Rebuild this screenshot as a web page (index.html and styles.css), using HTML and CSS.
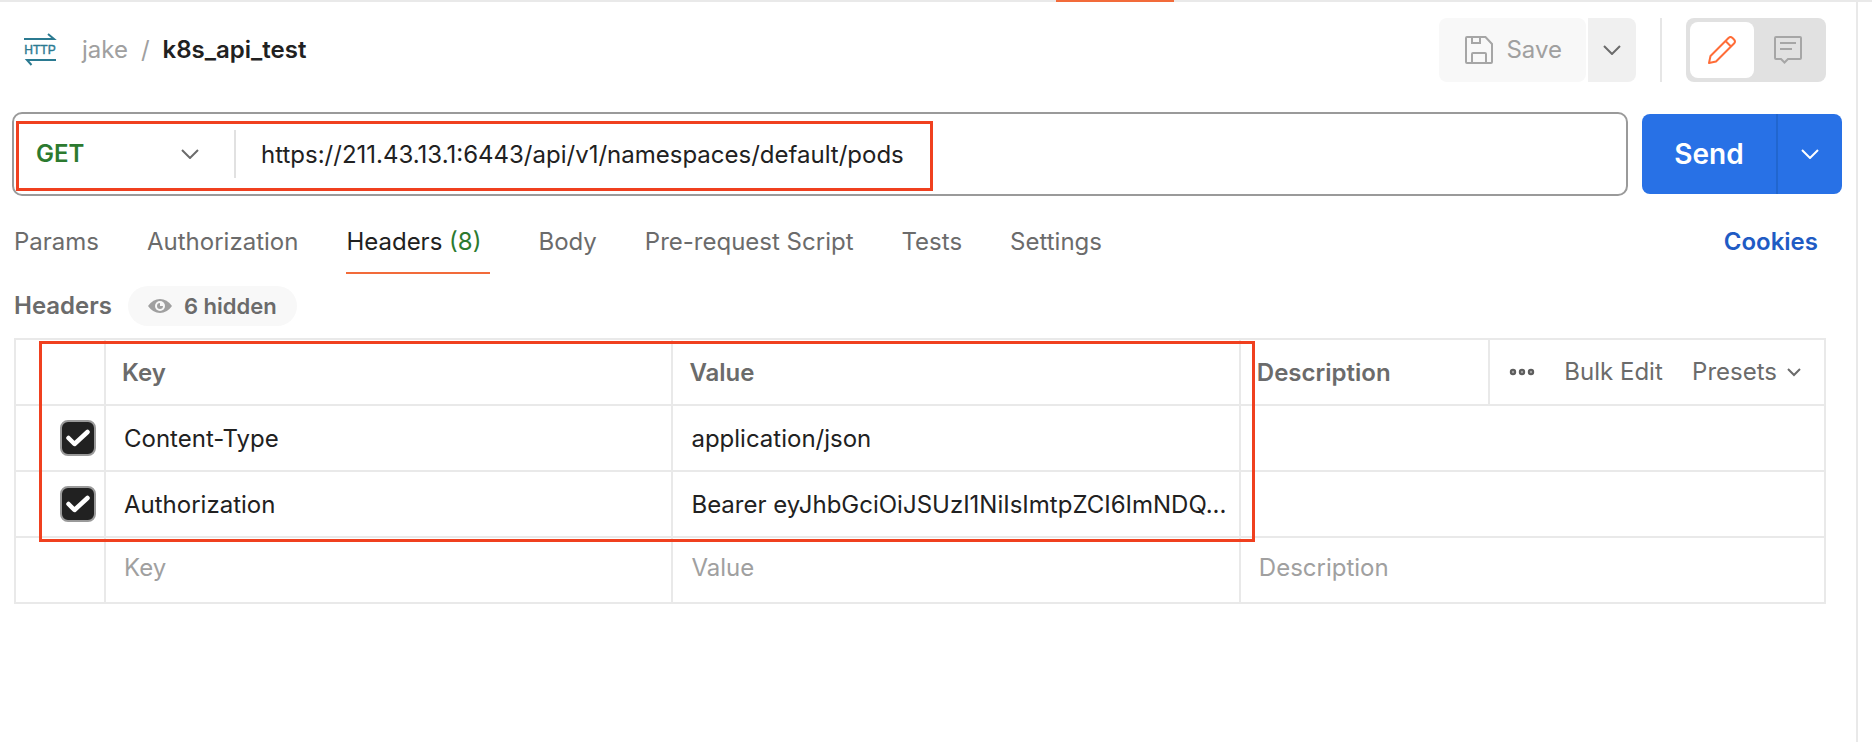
FILE: index.html
```html
<!DOCTYPE html>
<html lang="en">
<head>
<meta charset="utf-8">
<title>k8s_api_test</title>
<link rel="stylesheet" href="styles.css">
</head>
<body>
<div class="tabstrip"><span class="tabstrip-active"></span></div>
<div class="shell">
<main class="request">
  <header class="topbar">
    <svg class="http-icon" width="32" height="34" viewBox="0 0 32 34" aria-hidden="true">
      <path d="M0 6H30L24 1M32 27H3L7.500 32" fill="none" stroke="#2b7a91" stroke-width="2"/>
      <text class="http-text" x="16" y="21" text-anchor="middle">HTTP</text>
    </svg>
    <nav class="crumbs" aria-label="Breadcrumb">
      <a class="crumb" href="#">jake</a>
      <span class="crumb">/</span>
      <h1 class="crumb-title">k8s_api_test</h1>
    </nav>
    <div class="save-group">
      <button class="save" type="button">
        <svg width="28" height="28" viewBox="0 0 28 28" fill="none" stroke="#a6a6a6" stroke-width="2" aria-hidden="true"><path d="M2 1H20.500L27 8V26Q27 27 26 27H2Q1 27 1 26V2Q1 1 2 1ZM7 1V7H15V1M7 27V18Q7 17 8 17H20Q21 17 21 18V27"/></svg>
        Save
      </button>
      <button class="save-more" type="button" aria-label="Save options">
        <svg width="18" height="10" viewBox="0 0 18 10" fill="none" stroke="#6b6b6b" stroke-width="2" aria-hidden="true"><path d="M1 1L9 9L17 1"/></svg>
      </button>
    </div>
    <span class="divider"></span>
    <div class="toggle">
      <button class="toggle-button toggle-on" type="button" aria-label="Edit">
        <svg width="28" height="28" viewBox="0 0 28 28" fill="none" stroke="#ff6c37" stroke-width="2" stroke-linejoin="round" aria-hidden="true"><path d="M1 27L2.500 20L20.500 2Q22.500 0 24.500 2L26 3.500Q28 5.500 26 7.500L8 25.500ZM17.500 5L23 10.500"/></svg>
      </button>
      <button class="toggle-button" type="button" aria-label="Comments">
        <svg width="28" height="28" viewBox="0 0 28 28" fill="none" stroke="#a6a6a6" stroke-width="2" aria-hidden="true"><path d="M2 1H26Q27 1 27 2V22Q27 23 26 23H14L10.500 26.500L7 23H2Q1 23 1 22V2Q1 1 2 1ZM6 7H22M6 13H18"/></svg>
      </button>
    </div>
  </header>

  <form class="urlrow">
    <div class="urlbox">
      <div class="method">
        <select class="method-select" aria-label="Method"><option>GET</option><option>POST</option></select>
        <svg width="18" height="10" viewBox="0 0 18 10" fill="none" stroke="#6b6b6b" stroke-width="2" aria-hidden="true"><path d="M1 1L9 9L17 1"/></svg>
      </div>
      <input class="url" type="text" aria-label="Request URL" value="https://211.43.13.1:6443/api/v1/namespaces/default/pods">
      <span class="mark mark-url"></span>
    </div>
    <div class="send-group">
      <button class="send" type="button">Send</button>
      <button class="send-more" type="button" aria-label="Send options">
        <svg width="18" height="10" viewBox="0 0 18 10" fill="none" stroke="#fff" stroke-width="2" aria-hidden="true"><path d="M1 1L9 9L17 1"/></svg>
      </button>
    </div>
  </form>

  <nav class="tabs" aria-label="Request sections">
    <a class="tab" href="#">Params</a>
    <a class="tab" href="#">Authorization</a>
    <a class="tab tab-on" href="#">Headers <span class="count">(8)</span></a>
    <a class="tab" href="#">Body</a>
    <a class="tab" href="#">Pre-request Script</a>
    <a class="tab" href="#">Tests</a>
    <a class="tab" href="#">Settings</a>
    <a class="cookies" href="#">Cookies</a>
  </nav>

  <div class="subhead">
    <h2 class="subhead-title">Headers</h2>
    <button class="pill" type="button">
      <svg width="24" height="14" viewBox="0 0 24 14" aria-hidden="true"><path d="M0 7Q5 0 12 0T24 7Q19 14 12 14T0 7Z" fill="#a0a0a0"/><circle cx="12" cy="7" r="5" fill="#f8f8f8"/><path d="M12 4A3 3 0 1 0 15 7H12Z" fill="#a0a0a0"/></svg>
      6 hidden
    </button>
  </div>

  <div class="tablewrap">
    <table class="grid">
      <colgroup><col class="col-check"><col class="col-text"><col class="col-text"><col><col class="col-actions"></colgroup>
      <thead>
        <tr>
          <th></th><th>Key</th><th>Value</th><th>Description</th>
          <td class="actions-cell">
            <div class="actions">
              <button class="plain" type="button" aria-label="More">
                <svg width="26" height="8" viewBox="0 0 26 8" fill="#a0a0a0" stroke="#5c5c5c" stroke-width="2" aria-hidden="true"><circle cx="4" cy="4" r="2.200"/><circle cx="13" cy="4" r="2.200"/><circle cx="22" cy="4" r="2.200"/></svg>
              </button>
              <button class="plain" type="button">Bulk Edit</button>
              <button class="plain presets" type="button">Presets
                <svg width="14" height="9" viewBox="0 0 14 9" fill="none" stroke="#6b6b6b" stroke-width="2" aria-hidden="true"><path d="M1 1L7 7L13 1"/></svg>
              </button>
            </div>
          </td>
        </tr>
      </thead>
      <tbody>
        <tr>
          <td class="check-cell"><label class="check"><input class="check-input" type="checkbox" checked aria-label="Content-Type"><svg class="check-mark" width="24" height="18" viewBox="0 0 24 18" aria-hidden="true"><path d="M2.500 9L8.500 15L21.500 3" fill="none" stroke="#fff" stroke-width="4.500" stroke-linecap="round" stroke-linejoin="round"/></svg></label></td>
          <td>Content-Type</td><td>application/json</td><td colspan="2"></td>
        </tr>
        <tr>
          <td class="check-cell"><label class="check"><input class="check-input" type="checkbox" checked aria-label="Authorization"><svg class="check-mark" width="24" height="18" viewBox="0 0 24 18" aria-hidden="true"><path d="M2.500 9L8.500 15L21.500 3" fill="none" stroke="#fff" stroke-width="4.500" stroke-linecap="round" stroke-linejoin="round"/></svg></label></td>
          <td>Authorization</td><td>Bearer eyJhbGciOiJSUzI1NiIsImtpZCI6ImNDQ...</td><td colspan="2"></td>
        </tr>
        <tr class="blank">
          <td></td>
          <td><input class="cell-input" type="text" placeholder="Key" aria-label="Key"></td>
          <td><input class="cell-input" type="text" placeholder="Value" aria-label="Value"></td>
          <td colspan="2"><input class="cell-input" type="text" placeholder="Description" aria-label="Description"></td>
        </tr>
      </tbody>
    </table>
    <span class="mark mark-table"></span>
  </div>
</main>
</div>
</body>
</html>
```
FILE: styles.css
```css
* { box-sizing: border-box; }

body {
  margin: 0;
  min-height: 100vh;
  display: flex;
  flex-direction: column;
  background: #fff;
  color: #212121;
  font: 24px/32px Inter, "Liberation Sans", sans-serif;
}

button, input, select { font: inherit; color: inherit; border: 0; margin: 0; padding: 0; background: none; }
button { cursor: pointer; }
a { text-decoration: none; color: inherit; }
svg { display: block; flex: none; }

.tabstrip { height: 2px; background: #e9e9e9; }
.tabstrip-active { display: block; width: 118px; height: 2px; margin-left: 1056px; background: #f26b3a; }

.shell { flex: 1; display: flex; padding-right: 14px; }
.request { flex: 1; min-width: 0; border-right: 2px solid #e9e9e9; padding: 16px 14px 0 12px; }

.topbar { display: flex; align-items: center; height: 64px; padding: 0 16px 0 12px; }
.http-icon { overflow: visible; }
.http-text { font: 12px "Liberation Sans", sans-serif; fill: #2b7a91; stroke: #2b7a91; stroke-width: 0.4px; }
.crumbs { display: flex; gap: 13px; margin-left: 26px; margin-right: auto; color: #a0a0a0; }
.crumb-title { margin: 0; font-size: 24px; font-weight: 600; color: #212121; }

.save-group { display: flex; gap: 2px; height: 64px; }
.save { display: flex; align-items: center; gap: 13px; padding: 0 24px 0 26px; border-radius: 8px; background: #f8f8f8; color: #a0a0a0; }
.save-more { display: grid; place-items: center; width: 48px; border-radius: 0 8px 8px 0; background: #f0f0f0; }
.divider { width: 2px; height: 64px; margin: 0 24px; background: #e6e6e6; }
.toggle { display: flex; width: 140px; height: 64px; padding: 4px; border-radius: 8px; background: #e1e1e1; }
.toggle-button { display: grid; place-items: center; width: 68px; border-radius: 8px; }
.toggle-on { width: 64px; background: #fff; }

.urlrow { display: flex; align-items: center; gap: 14px; margin: 30px 0 0; }
.urlbox { position: relative; flex: 1; display: flex; align-items: center; height: 84px; border: 2px solid #9a9a9a; border-radius: 10px; }
.method { display: flex; align-items: center; width: 222px; height: 48px; padding: 0 35px 0 22px; border-right: 2px solid #e1e1e1; }
.method-select { flex: 1; min-width: 0; appearance: none; font-weight: 600; color: #2c7a2f; outline: 0; }
.url { flex: 1; min-width: 0; height: 48px; padding: 0 25px; outline: 0; }
.send-group { display: flex; height: 80px; border-radius: 8px; overflow: hidden; background: #2871e6; color: #fff; }
.send { width: 134px; font-size: 28px; font-weight: 600; }
.send-more { display: grid; place-items: center; width: 66px; border-left: 2px solid #2166cf; }

.mark { position: absolute; border: 3px solid #f0401f; pointer-events: none; }
.mark-url { left: 2px; top: 7px; width: 917px; height: 70px; }
.mark-table { left: 25px; top: 3px; width: 1216px; height: 201px; }

.tabs { display: flex; gap: 48px; margin-top: 14px; padding: 0 24px 0 2px; color: #6b6b6b; }
.tab { white-space: nowrap; padding: 14px 0; border-top: 2px solid transparent; border-bottom: 2px solid transparent; }
.tab-on { padding-right: 9px; color: #212121; border-bottom-color: #f26b3a; }
.count { color: #2c7a2f; }
.cookies { margin-left: auto; padding: 16px 0; font-weight: 600; color: #1f5bc4; }

.subhead { display: flex; align-items: center; gap: 16px; margin: 12px 0 0 2px; color: #6b6b6b; }
.subhead-title { margin: 0; font-size: 24px; font-weight: 600; }
.pill { display: flex; align-items: center; gap: 12px; height: 40px; padding: 0 20px; border-radius: 20px; background: #f8f8f8; font-size: 22px; font-weight: 600; }

.tablewrap { position: relative; margin: 12px 16px 0 2px; }
.grid { width: 100%; table-layout: fixed; border-collapse: collapse; }
.col-check { width: 90px; }
.col-text { width: 31.35%; }
.col-actions { width: 336px; }
.grid th, .grid td { height: 66px; padding: 2px 16px 0 18px; border: 2px solid #e9e9e9; text-align: left; white-space: nowrap; }
.grid th { padding-left: 16px; font-weight: 600; color: #6b6b6b; }
.grid .actions-cell { padding: 0 23px 0 19px; }
.actions { display: flex; align-items: center; justify-content: space-between; color: #6b6b6b; }
.presets { display: flex; align-items: center; gap: 10px; }
.grid .check-cell { padding: 0 8px 0 0; }
.check { position: relative; display: block; width: 36px; height: 36px; margin-left: auto; }
.check-input { display: block; appearance: none; width: 36px; height: 36px; border: 2px solid #9a9a9a; border-radius: 8px; background: #212121; }
.check-mark { position: absolute; left: 6px; top: 9px; }
.cell-input { display: block; width: 100%; height: 32px; outline: 0; }
.cell-input::placeholder { color: #a0a0a0; opacity: 1; }
.grid .blank td { padding-top: 0; padding-bottom: 4px; }
```
